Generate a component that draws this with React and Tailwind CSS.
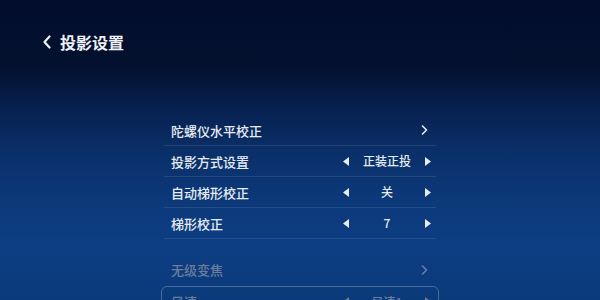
import React from "react";

const font = { fontFamily: '"Noto Sans CJK SC", "Noto Sans", sans-serif' };

function TriLeft() {
  return (
    <svg width="6" height="9" viewBox="0 0 6 9" className="block">
      <path d="M6 0 L0 4.5 L6 9 Z" fill="currentColor" />
    </svg>
  );
}
function TriRight() {
  return (
    <svg width="6" height="9" viewBox="0 0 6 9" className="block">
      <path d="M0 0 L6 4.5 L0 9 Z" fill="currentColor" />
    </svg>
  );
}
function Chevron() {
  return (
    <svg width="7" height="10" viewBox="0 0 7 10" className="block">
      <path d="M1.5 1 L5.5 5 L1.5 9" fill="none" stroke="currentColor" strokeWidth="1.6" strokeLinecap="round" strokeLinejoin="round" />
    </svg>
  );
}

function ArrowRow({ label, muted }) {
  return (
    <div className={`h-[31px] flex items-center justify-between pl-[7px] pr-[8px] ${muted ? "text-[#6c7e9c]" : "text-[#e8ecf2] border-b border-white/10"}`}>
      <span className="text-[13px] font-medium leading-none">{label}</span>
      <Chevron />
    </div>
  );
}

function ValueRow({ label, value }) {
  return (
    <div className="h-[31px] flex items-center justify-between pl-[7px] pr-[5px] text-[#e8ecf2] border-b border-white/10">
      <span className="text-[13px] font-medium leading-none">{label}</span>
      <div className="w-[88px] flex items-center justify-between">
        <TriLeft />
        <span className="text-[12px] font-medium leading-none">{value}</span>
        <TriRight />
      </div>
    </div>
  );
}

export default function App() {
  return (
    <div
      style={font}
      className="w-[600px] h-[300px] overflow-hidden bg-[linear-gradient(180deg,#020d2c_0%,#03112f_22%,#071f4d_35%,#0a2f68_50%,#0c3878_65%,#0d3e83_82%,#0b3a7a_100%)]"
    >
      <div className="flex items-center pt-[34px] pl-[42px] text-[#eef1f6]">
        <svg width="10" height="14" viewBox="0 0 10 14" className="block">
          <path d="M7.5 1.5 L2.5 7 L7.5 12.5" fill="none" stroke="currentColor" strokeWidth="2.2" strokeLinecap="round" strokeLinejoin="round" />
        </svg>
        <span className="ml-[8px] text-[16px] font-bold leading-none">投影设置</span>
      </div>

      <div className="ml-[164px] w-[272px] mt-[65px]">
        <ArrowRow label="陀螺仪水平校正" />
        <ValueRow label="投影方式设置" value="正装正投" />
        <ValueRow label="自动梯形校正" value="关" />
        <ValueRow label="梯形校正" value="7" />
        <div className="h-[15px]" />
        <ArrowRow label="无级变焦" muted />
        <div className="-mx-[3px] mt-[1px] h-[31px] rounded-md border border-white/25 flex items-center justify-between pl-[9px] pr-[7px] text-[#6c7e9c]">
          <span className="text-[13px] font-medium leading-none">风速</span>
          <div className="w-[88px] flex items-center justify-between">
            <TriLeft />
            <span className="text-[12px] font-medium leading-none">风速1</span>
            <TriRight />
          </div>
        </div>
      </div>
    </div>
  );
}
